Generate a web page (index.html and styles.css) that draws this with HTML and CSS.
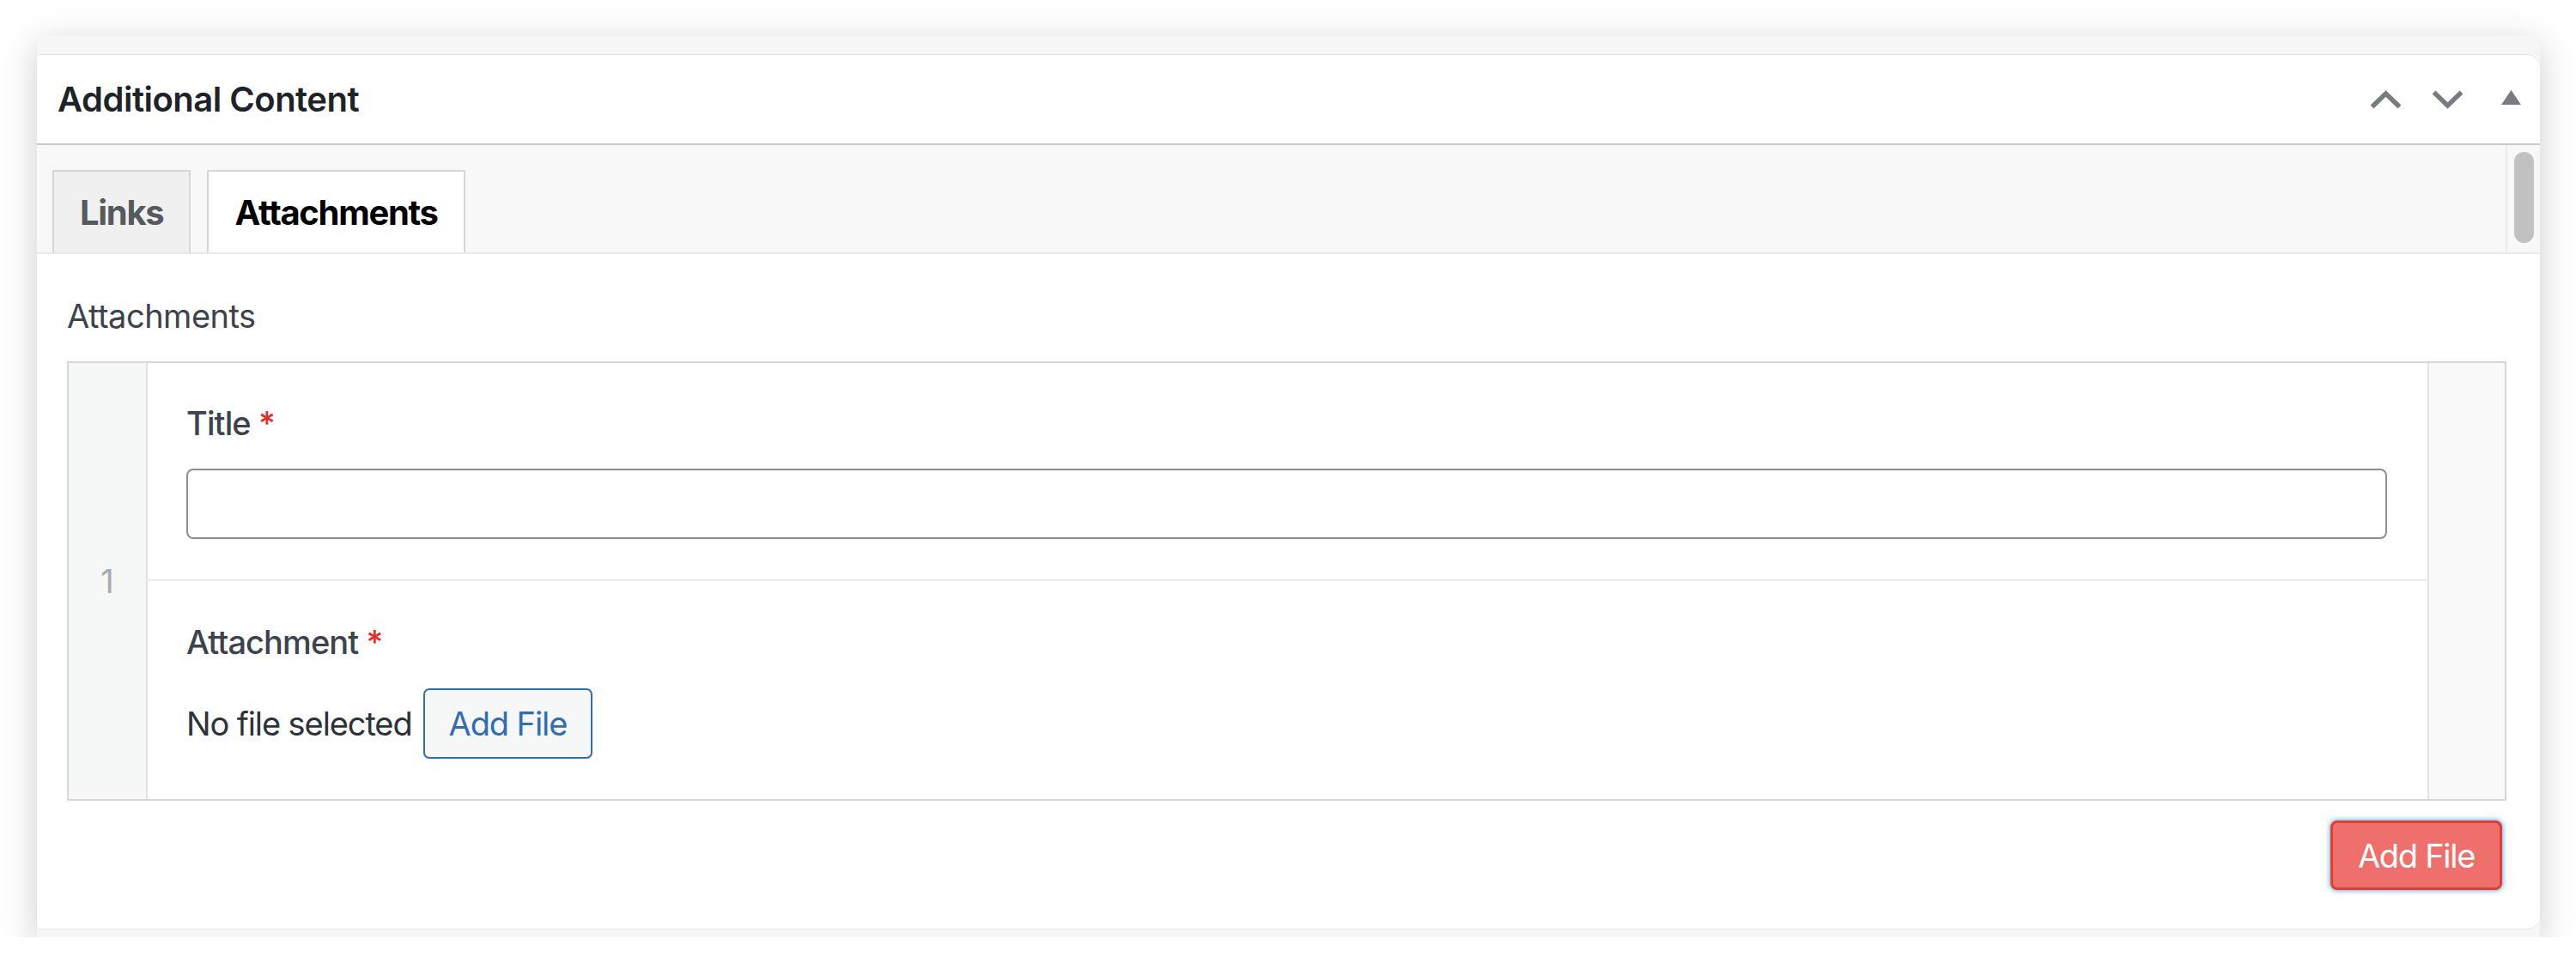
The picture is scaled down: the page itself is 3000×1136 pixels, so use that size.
FILE: index.html
```html
<!DOCTYPE html>
<html lang="en">
<head>
<meta charset="utf-8">
<title>Additional Content</title>
<link rel="stylesheet" href="styles.css">
</head>
<body>
<div class="frame">
  <div class="postbox">
    <div class="postbox-header">
      <h2 class="postbox-title">Additional Content</h2>
      <div class="handle-actions">
        <span class="handle up"><svg viewBox="0 0 37 22" width="37" height="22"><polyline points="2.5,19.5 18.5,4 34.5,19.5" fill="none" stroke="#787c82" stroke-width="5.5" stroke-linejoin="miter"/></svg></span>
        <span class="handle down"><svg viewBox="0 0 37 22" width="37" height="22"><polyline points="2.5,2.5 18.5,18 34.5,2.5" fill="none" stroke="#787c82" stroke-width="5.5" stroke-linejoin="miter"/></svg></span>
        <span class="handle toggle"><svg viewBox="0 0 23 17" width="23" height="17"><polygon points="0,17 11.5,0 23,17" fill="#787c82"/></svg></span>
      </div>
    </div>
    <div class="tabs-wrap">
      <ul class="tabs">
        <li class="tab">Links</li>
        <li class="tab active">Attachments</li>
      </ul>
      <div class="scroll-track"><div class="scroll-thumb"></div></div>
    </div>
    <div class="inside">
      <div class="section-label">Attachments</div>
      <div class="repeater">
        <div class="row-num">1</div>
        <div class="row-fields">
          <div class="field">
            <label class="field-label">Title <span class="req">*</span></label>
            <div class="text-input"></div>
          </div>
          <div class="field">
            <label class="field-label">Attachment <span class="req">*</span></label>
            <div class="file-row">
              <span class="file-none">No file selected</span>
              <span class="btn-secondary">Add File</span>
            </div>
          </div>
        </div>
        <div class="row-handle"></div>
      </div>
      <div class="actions">
        <span class="btn-primary">Add File</span>
      </div>
    </div>
  </div>
</div>
</body>
</html>
```

FILE: styles.css
```css
* { box-sizing: border-box; }
html, body { margin: 0; padding: 0; background: #ffffff; }
body {
  font-family: Inter, "Noto Sans", "Liberation Sans", sans-serif;
  color: #3c434a;
}
.frame {
  margin: 42px 0 0 43px;
  width: 2915px;
  height: 1050px;
  padding: 21px 0 9px 0;
  background: #f6f6f6;
  box-shadow: 0 10px 40px rgba(0, 0, 0, 0.2);
}
.postbox {
  height: 1020px;
  background: #ffffff;
  border-top: 1px solid #e1e1e1;
  border-bottom: 1px solid #e3e3e3;
  border-radius: 4px 16px 16px 4px;
  overflow: hidden;
  display: flex;
  flex-direction: column;
}
.postbox-header {
  height: 105px;
  flex: none;
  border-bottom: 2px solid #c8c9cc;
  display: flex;
  align-items: center;
  padding: 0 22px 0 24px;
}
.postbox-title {
  margin: 0;
  flex: 1;
  font-size: 40px;
  font-weight: 600;
  color: #1d2327;
  letter-spacing: -0.5px;
  line-height: 52px;
}
.handle-actions { display: flex; align-items: center; }
.handle { display: flex; }
.handle svg { display: block; }
.handle.down { margin-left: 35px; }
.handle.toggle { margin-left: 44px; margin-top: -4px; }
.tabs-wrap {
  flex: none;
  height: 127px;
  background: #f8f8f8;
  border-bottom: 2px solid #e8e9ea;
  display: flex;
}
.tabs {
  list-style: none;
  margin: 0;
  padding: 29px 0 0 18px;
  flex: 1;
  display: flex;
  gap: 19px;
  align-items: flex-end;
}
.tab {
  height: 96px;
  padding: 0 30px;
  border: 2px solid #d4d6d8;
  border-bottom: none;
  background: #f0f0f0;
  color: #555a5f;
  font-size: 40px;
  font-weight: 700;
  letter-spacing: -1.3px;
  display: flex;
  align-items: center;
}
.tab.active { background: #ffffff; color: #000000; }
.scroll-track {
  width: 40px;
  flex: none;
  border-left: 2px solid #ebebeb;
  background: #f8f8f8;
  padding: 8px 0 0 8px;
}
.scroll-thumb {
  width: 23px;
  height: 106px;
  border-radius: 12px;
  background: #c1c1c1;
}
.inside {
  padding: 46px 39px 0 35px;
  flex: 1;
}
.section-label {
  font-size: 38px;
  line-height: 52px;
  color: #3c434a;
  letter-spacing: -0.5px;
  margin-bottom: 27px;
}
.repeater {
  display: flex;
  border: 2px solid #d5d7d9;
  height: 512px;
}
.row-num {
  width: 92px;
  flex: none;
  background: #f6f7f7;
  border-right: 2px solid #e2e3e5;
  display: flex;
  align-items: center;
  justify-content: center;
  font-size: 38px;
  color: #a7aaad;
}
.row-fields { flex: 1; display: flex; flex-direction: column; }
.field {
  padding: 44px 47px 47px 45px;
}
.field + .field { border-top: 2px solid #ececee; padding-top: 45px; }
.field-label {
  display: block;
  font-size: 38px;
  line-height: 52px;
  font-weight: 500;
  color: #3c434a;
  letter-spacing: -0.9px;
  margin-bottom: 27px;
}
.field + .field .field-label { margin-bottom: 28px; }
.req { color: #e52d27; font-weight: 500; }
.text-input {
  height: 82px;
  border: 2px solid #8c8f94;
  border-radius: 8px;
  background: #ffffff;
}
.file-row { display: flex; align-items: center; }
.file-none {
  font-size: 38px;
  color: #2c3338;
  letter-spacing: -1.1px;
  margin-right: 13px;
}
.btn-secondary {
  height: 82px;
  padding: 0 28px;
  border: 2px solid #2f6db5;
  border-radius: 7px;
  background: #f6f7f7;
  color: #2f6db5;
  font-size: 38px;
  letter-spacing: -1.1px;
  display: flex;
  align-items: center;
}
.row-handle {
  width: 90px;
  flex: none;
  background: #f9f9f9;
  border-left: 2px solid #e2e3e5;
}
.actions {
  display: flex;
  justify-content: flex-end;
  padding: 23px 5px 0 0;
}
.btn-primary {
  height: 81px;
  padding: 0 29px;
  border: 3px solid #e53b30;
  border-radius: 8px;
  background: #ef6f6c;
  color: #ffffff;
  font-size: 38px;
  letter-spacing: -1.3px;
  display: flex;
  align-items: center;
  box-shadow: 0 0 0 1px #9fd3ef, 0 0 5px 2px #8fc8e8;
}
```
